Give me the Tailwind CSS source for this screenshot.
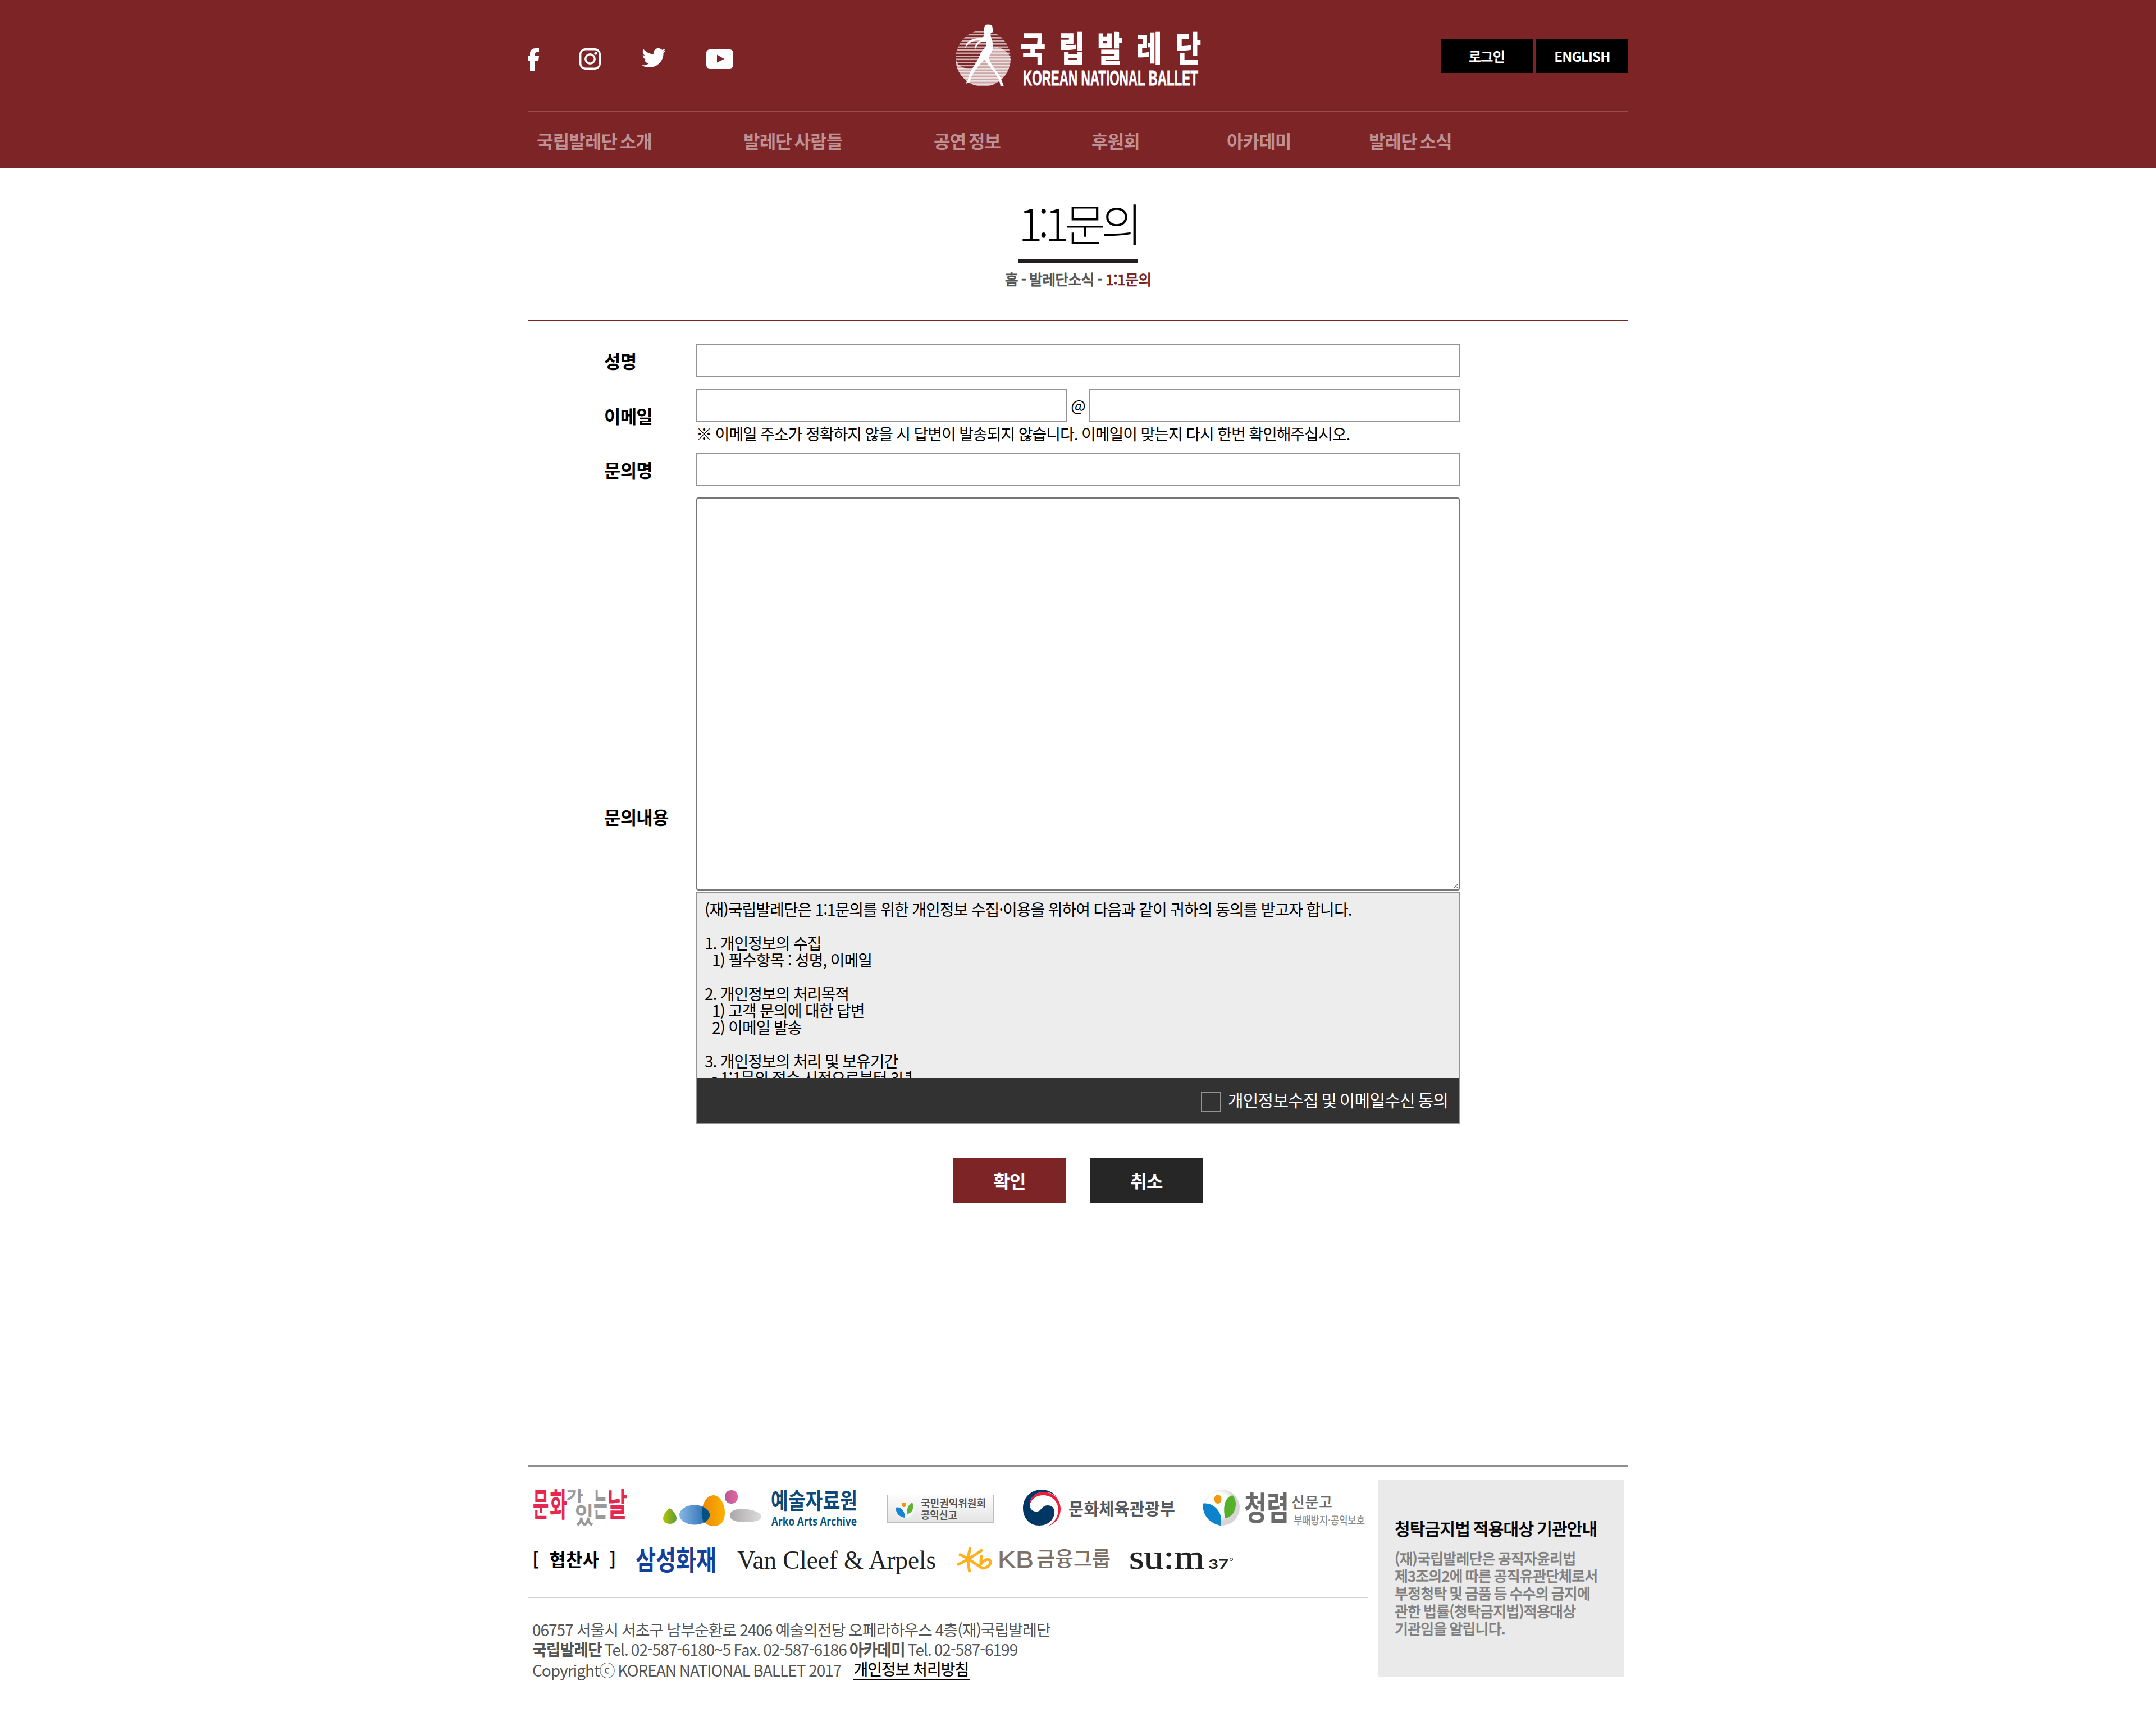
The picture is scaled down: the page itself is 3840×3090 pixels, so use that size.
<!DOCTYPE html>
<html lang="ko">
<head>
<meta charset="utf-8">
<title>1:1문의 | 국립발레단</title>
<script src="https://cdn.jsdelivr.net/npm/@tailwindcss/browser@4"></script>
</head>
<body class="bg-white text-black tracking-[-0.8px] font-['Noto_Sans_CJK_KR','Noto_Sans',sans-serif]">
<header class="h-[300px] bg-[#7d2427]">
  <div class="mx-auto w-[1960px]">
    <div class="flex h-[200px] items-start border-b-2 border-[#964e50]">
      <svg class="mt-[86px] h-[40px] w-[20px]" viewBox="0 0 20 40" fill="#fff"><path d="M4 40V22H0v-8h4V10C4 3 8 0 14 0h6v7h-4c-2 0-3 1-3 3v4h7l-1 8h-6v18z"/></svg>
      <svg class="mt-[86px] ml-[72px] h-[38px] w-[38px]" viewBox="0 0 38 38" fill="none" stroke="#fff" stroke-width="3.4"><rect x="1.7" y="1.7" width="34.6" height="34.6" rx="9"/><circle cx="19" cy="19" r="8.2"/><circle cx="29" cy="9" r="2.6" fill="#fff" stroke="none"/></svg>
      <svg class="mt-[86px] ml-[73px] h-[34px] w-[43px]" viewBox="0 0 24 19.5" preserveAspectRatio="none" fill="#fff"><path d="M24 2.3a10 10 0 0 1-2.8.8A5 5 0 0 0 23.3.4a10 10 0 0 1-3.1 1.2 4.9 4.9 0 0 0-8.400 4.500A14 14 0 0 1 1.700.9a4.900 4.900 0 0 0 1.500 6.600A4.900 4.900 0 0 1 1 6.900c0 2.400 1.600 4.400 3.900 4.900a5 5 0 0 1-2.200.1 4.900 4.900 0 0 0 4.600 3.400A9.900 9.900 0 0 1 0 17.300 14 14 0 0 0 7.500 19.500c9.100 0 14.300-7.700 14-14.600A10 10 0 0 0 24 2.300z"/></svg>
      <svg class="mt-[88px] ml-[72px] h-[34px] w-[48px]" viewBox="0 0 48 34"><rect width="48" height="34" rx="6" fill="#fff"/><path d="M19 9.500L32 17 19 23.500z" fill="#7d2427"/></svg>
      <svg class="mt-[44px] ml-[396px] h-[110px] w-[436px] overflow-visible" viewBox="0 0 436 110" fill="#fff">
        <defs>
          <pattern id="stripe" width="10" height="5.5" patternUnits="userSpaceOnUse"><rect width="10" height="2.600" fill="#fff" fill-opacity=".66"/></pattern>
          <clipPath id="disc"><ellipse cx="49" cy="60" rx="49" ry="50"/></clipPath>
        </defs>
        <g clip-path="url(#disc)">
          <rect y="8" width="98" height="102" fill="url(#stripe)"/>
          <path d="M0 60C4 76 14 78 30 78C44 74 44 40 74 40C92 44 100 56 98 70L90 110H10L0 80z" fill-opacity=".6"/>
        </g>
        <path d="M53 1C56-1 63-1 65 2L67 12L62 16L63 23C68 34 68 44 62 52C58 58 60 64 65 72C73 84 80 92 82 99L86 110H80C79 100 74 90 66 81L51 62C44 70 38 76 33 84C27 92 27 98 25 103L18 105L22 97C24 90 26 84 31 76C38 66 42 58 45 50C50 42 56 42 54 30C42 30 40 34 34 45C34 36 38 30 46 27C32 28 24 30 17 42C19 28 30 25 40 24C48 24 52 22 51 14C50 8 51 4 53 1z"/>
        <g font-family="'Noto Sans CJK KR',sans-serif" font-weight="900" font-size="62" letter-spacing="0" transform="scale(.81 1)"><text x="141 227 311 397 483" y="66">국립발레단</text></g>
        <text x="120" y="108" font-family="'Liberation Sans',sans-serif" font-weight="700" font-size="37" letter-spacing="0" stroke="#fff" stroke-width=".8" textLength="312" lengthAdjust="spacingAndGlyphs">KOREAN NATIONAL BALLET</text>
      </svg>
      <div class="mt-[70px] ml-auto flex gap-[6px] text-center text-[24px] leading-[60px] font-bold text-white">
        <a class="h-[60px] w-[164px] bg-black">로그인</a>
        <a class="h-[60px] w-[164px] bg-black">ENGLISH</a>
      </div>
    </div>
    <nav class="grid h-[100px] grid-cols-[368px_339px_281px_241px_253px_1fr] pl-[16px] text-[32px] leading-[100px] font-bold text-[#be9193] [word-spacing:-3.5px]">
      <a>국립발레단 소개</a><a>발레단 사람들</a><a>공연 정보</a><a>후원회</a><a>아카데미</a><a>발레단 소식</a>
    </nav>
  </div>
</header>
<main class="mx-auto w-[1960px]">
  <div class="flex h-[272px] flex-col items-center border-b-2 border-[#7d2427] pt-[28px]">
    <h1 class="h-[140px] w-[212px] border-b-[6px] border-[#231f20] text-center text-[80px] leading-[134px] font-light tracking-[-8px] whitespace-nowrap">1:1문의</h1>
    <p class="text-[26px] leading-[58px] font-medium text-[#555] [word-spacing:-0.6px] [-webkit-text-stroke:0.6px]">홈 - 발레단소식 - <span class="text-[#7d2427]">1:1문의</span></p>
  </div>
  <form class="mt-[40px] ml-[136px] w-[1524px]">
    <div class="flex">
      <label class="w-[164px] text-[32px] leading-[60px] font-bold">성명</label>
      <input class="h-[60px] w-[1360px] border-2 border-[#939393]">
    </div>
    <div class="mt-[20px] flex h-[96px]">
      <label class="w-[164px] text-[32px] leading-[96px] font-bold">이메일</label>
      <div>
        <div class="flex h-[60px]">
          <input class="h-[60px] w-[660px] border-2 border-[#939393]">
          <span class="w-[40px] text-center text-[28px] leading-[58px]">@</span>
          <input class="h-[60px] w-[660px] border-2 border-[#939393]">
        </div>
        <p class="h-[36px] text-[28px] leading-[40px] tracking-[-1px] [word-spacing:-0.4px]">※ 이메일 주소가 정확하지 않을 시 답변이 발송되지 않습니다. 이메일이 맞는지 다시 한번 확인해주십시오.</p>
      </div>
    </div>
    <div class="mt-[18px] flex">
      <label class="w-[164px] text-[32px] leading-[60px] font-bold">문의명</label>
      <input class="h-[60px] w-[1360px] border-2 border-[#939393]">
    </div>
    <div class="mt-[20px] flex h-[1116px]">
      <label class="w-[164px] pt-[20px] text-[32px] leading-[1096px] font-bold">문의내용</label>
      <div class="flex flex-col gap-[2px]">
        <div class="relative">
          <textarea class="block h-[700px] w-[1360px] resize-none rounded-[4px] border-2 border-[#767676]"></textarea>
          <svg class="absolute right-[3px] bottom-[4px] h-[8px] w-[8px]" viewBox="0 0 8 8" stroke="#666" stroke-width="1.300"><path d="M0 8L8 0M5 8L8 5"/></svg>
        </div>
        <div class="h-[414px] border-2 border-[#939393] bg-[#ededed]">
          <div class="h-[330px] overflow-hidden px-[13px] pt-[14px] text-[28px] leading-[30px] tracking-[-1px] whitespace-pre [word-spacing:-0.4px]">(재)국립발레단은 1:1문의를 위한 개인정보 수집·이용을 위하여 다음과 같이 귀하의 동의를 받고자 합니다.

1. 개인정보의 수집
&nbsp; 1) 필수항목 : 성명, 이메일

2. 개인정보의 처리목적
&nbsp; 1) 고객 문의에 대한 답변
&nbsp; 2) 이메일 발송

3. 개인정보의 처리 및 보유기간
&nbsp; - 1:1문의 접수 시점으로부터 3년</div>
          <div class="flex h-[80px] items-center justify-end gap-[12px] bg-[#323232] pr-[19px] text-[30px] leading-[76px] text-white [word-spacing:-2px]">
            <i class="mt-[4px] h-[36px] w-[36px] border-2 border-[#939393]"></i><span class="h-[80px]">개인정보수집 및 이메일수신 동의</span>
          </div>
        </div>
      </div>
    </div>
  </form>
  <div class="mt-[60px] flex justify-center gap-[44px] text-center text-[32px] leading-[80px] font-bold text-white">
    <a class="w-[200px] bg-[#7d2427]">확인</a>
    <a class="w-[200px] bg-[#262626]">취소</a>
  </div>
</main>
<footer class="mx-auto mt-[468px] flex w-[1960px] items-start border-t-2 border-[#8f8f8f]">
  <div class="w-[1496px]">
    <div class="flex h-[108px] items-start pt-[41px] pl-[10px] tracking-normal">
      <svg class="h-[66px] w-[168px] overflow-visible" viewBox="0 0 168 66" font-family="'Noto Sans CJK KR',sans-serif" font-weight="700" font-size="100">
        <g fill="#e5284e"><text transform="translate(-1 48) scale(.31 .58)">문</text><text transform="translate(29 48) scale(.34 .58)">화</text><text transform="translate(131 48) scale(.4 .58)">날</text></g>
        <g fill="#999"><text transform="translate(58 21) scale(.34 .26)">가</text><text transform="translate(74 61) scale(.36 .42)">있</text><text transform="translate(107 48) scale(.27 .58)">는</text></g>
      </svg>
      <svg class="ml-[62px] h-[66px] w-[347px] overflow-visible" viewBox="0 0 347 66">
        <defs>
          <linearGradient id="gr"><stop stop-color="#b9c400"/><stop offset="1" stop-color="#5c9a3c"/></linearGradient>
          <linearGradient id="bl"><stop stop-color="#86b6e4"/><stop offset="1" stop-color="#1f66ae"/></linearGradient>
          <linearGradient id="or"><stop stop-color="#ee8600"/><stop offset="1" stop-color="#fbb200"/></linearGradient>
          <linearGradient id="pk"><stop stop-color="#b35a92"/><stop offset="1" stop-color="#e466a2"/></linearGradient>
          <linearGradient id="gy"><stop stop-color="#aaa7a8"/><stop offset="1" stop-color="#dcdcdc"/></linearGradient>
        </defs>
        <path d="M13 33C20 38 25 46 25 51C25 57 20 61 13 61C6 61 1 57 1 51C1 46 6 38 13 33z" fill="url(#gr)"/>
        <path d="M91 10C103 11 111 26 111 41C111 56 104 65 91 65C78 65 70 56 70 41C70 25 79 10 91 10z" fill="url(#or)"/>
        <ellipse cx="57" cy="45" rx="27" ry="17.500" fill="url(#bl)"/>
        <path d="M71 31C79 34 84 40 84 45C84 50 80 56 74 59C69 50 69 40 71 31z" fill="#035182"/>
        <rect x="111" y="1" width="23" height="24" rx="11" fill="url(#pk)"/>
        <path d="M120 46C120 38 130 34 142 34C160 35 176 41 176 48C176 55 164 58 146 58C130 58 120 54 120 46z" fill="url(#gy)"/>
        <text x="193" y="34" fill="#0c4a7b" font-family="'Noto Sans CJK KR',sans-serif" font-weight="700" font-size="40" textLength="154" lengthAdjust="spacingAndGlyphs">예술자료원</text>
        <text x="194" y="64" fill="#0c5680" font-family="'Open Sans',sans-serif" font-weight="700" font-size="21" textLength="152" lengthAdjust="spacingAndGlyphs">Arko Arts Archive</text>
      </svg>
      <svg class="mt-[9px] ml-[53px] h-[50px] w-[190px] overflow-visible" viewBox="0 0 190 50">
        <defs><linearGradient id="bx" x2="0" y2="1"><stop stop-color="#fdfdfd"/><stop offset="1" stop-color="#e4e4e4"/></linearGradient></defs>
        <rect width="190" height="50" fill="#bdbdbd"/><rect width="188" height="49" x="1" fill="url(#bx)"/>
        <circle cx="32" cy="25" r="17" fill="#f6f6f6"/>
        <path d="M15 23C25 20 32 30 32 41C22 40 16 34 15 23z" fill="#1385d2"/><circle cx="30" cy="18" r="4" fill="#f39314"/><path d="M45 14C48 22 46 33 36 34C34 26 38 17 45 14z" fill="#5fb136"/>
        <g fill="#555" font-family="'Noto Sans CJK KR',sans-serif" font-weight="700" font-size="18"><text x="60" y="22" textLength="116" lengthAdjust="spacingAndGlyphs">국민권익위원회</text><text x="60" y="43" textLength="65" lengthAdjust="spacingAndGlyphs">공익신고</text></g>
      </svg>
      <svg class="ml-[52px] h-[66px] w-[271px] overflow-visible" viewBox="0 0 271 66">
        <path d="M33 0C14 0 0 14 0 33C0 51 12 64 29 64C45 64 56 53 56 40C56 32 51 28 44 28C37 28 34 33 30 37C26 41 13 40 12 28C12 14 22 5 36 4C48 4 55 8 60 13C54 5 44 0 33 0z" fill="#003764"/>
        <path d="M12 28C12 14 22 5 36 4C52 4 67 16 67 34C67 50 58 60 45 65C56 58 63 48 63 36C63 20 50 10 36 10C24 10 14 17 12 28z" fill="#f01c38"/>
        <text x="81" y="45" fill="#57585a" font-family="'Noto Sans CJK KR',sans-serif" font-weight="700" font-size="30" textLength="190" lengthAdjust="spacingAndGlyphs">문화체육관광부</text>
      </svg>
      <svg class="ml-[49px] h-[66px] w-[290px] overflow-visible" viewBox="0 0 290 66">
        <defs><radialGradient id="ball" cx=".4" cy=".4"><stop offset=".6" stop-color="#fff"/><stop offset="1" stop-color="#d6d6d6"/></radialGradient></defs>
        <circle cx="34" cy="32" r="32" fill="url(#ball)"/>
        <path d="M0 25C16 22 33 36 33 54L32 64C14 60 0 48 0 25z" fill="#0c83cc"/>
        <ellipse cx="27" cy="17" rx="6.500" ry="8" fill="#f49a12"/>
        <path d="M53 10C64 20 60 48 40 51C36 34 38 14 53 10z" fill="#57b02c"/>
        <g fill="#6a6a6a" font-family="'Noto Sans CJK KR',sans-serif"><text transform="translate(74 54) scale(.8 1.150)" font-weight="700" font-size="50" textLength="100" lengthAdjust="spacingAndGlyphs">청렴</text><text x="158" y="32" font-size="26" font-weight="500" textLength="73" lengthAdjust="spacing">신문고</text><text x="162" y="62" fill="#8c8c8c" font-size="19" font-weight="500" textLength="127" lengthAdjust="spacingAndGlyphs">부패방지·공익보호</text></g>
      </svg>
    </div>
    <div class="flex h-[126px] items-start border-b-2 border-[#d3d3d3] pt-[36px] pl-[8px]">
      <span class="w-[185px] text-[32px] leading-[40px] font-bold tracking-normal [word-spacing:9.5px]">[ 협찬사 ]</span>
      <svg class="h-[46px] w-[142px] overflow-visible tracking-normal" viewBox="0 0 142 46"><text x="-1" y="40" fill="#12409a" font-family="'Noto Sans CJK KR',sans-serif" font-weight="700" font-size="48" textLength="144" lengthAdjust="spacingAndGlyphs">삼성화재</text></svg>
      <svg class="ml-[38px] h-[52px] w-[354px] overflow-visible tracking-normal" viewBox="0 0 354 52"><text x="0" y="38" fill="#222" font-family="'Liberation Serif',serif" font-size="46" textLength="354" lengthAdjust="spacingAndGlyphs">Van Cleef &amp; Arpels</text></svg>
      <svg class="ml-[37px] h-[46px] w-[273px] overflow-visible tracking-normal" viewBox="0 0 273 46">
        <g fill="none" stroke="#fdb11e" stroke-width="5"><path d="M24 0C20 14 20 30 23 44M1 31C16 24 32 14 46 4M4 12C20 18 34 30 46 37C58 36 64 26 58 22C54 20 48 24 44 28M44 14C43 20 43 26 43 31"/></g>
        <text x="73" y="36" fill="#7d7064" stroke="#7d7064" stroke-width=".5" font-family="'Liberation Sans',sans-serif" font-size="42" textLength="64" lengthAdjust="spacingAndGlyphs">KB</text>
        <text x="142" y="34" fill="#7d7064" font-family="'Noto Sans CJK KR',sans-serif" font-weight="500" font-size="37" textLength="132" lengthAdjust="spacingAndGlyphs">금융그룹</text>
      </svg>
      <svg class="ml-[34px] h-[46px] w-[186px] overflow-visible tracking-normal" viewBox="0 0 186 46" fill="#222" font-family="'Liberation Serif',serif"><text x="0" y="38" font-size="62" stroke="#222" stroke-width=".6" textLength="134" lengthAdjust="spacingAndGlyphs">su:m</text><text x="141" y="38" font-family="Lato,sans-serif" font-size="22" font-weight="700" textLength="36" lengthAdjust="spacingAndGlyphs">37</text><circle cx="182" cy="21" r="2.500" fill="none" stroke="#222"/></svg>
    </div>
    <div class="pt-[39px] pl-[8px] text-[28px] leading-[35px] tracking-[-1px] text-[#555]">
      <p class="[word-spacing:-0.8px]">06757 서울시 서초구 남부순환로 2406 예술의전당 오페라하우스 4층(재)국립발레단</p>
      <p class="[word-spacing:-1.8px]"><b>국립발레단</b> Tel. 02-587-6180~5 Fax. 02-587-6186 <b>아카데미</b> Tel. 02-587-6199</p>
      <p class="flex"><span class="mt-[2px] [word-spacing:-1.1px]">Copyrightⓒ KOREAN NATIONAL BALLET 2017</span><a class="ml-[22px] h-[37px] border-b-2 border-black pr-[3px] text-black [-webkit-text-stroke:0.3px]">개인정보 처리방침</a></p>
    </div>
  </div>
  <aside class="mt-[24px] ml-[18px] h-[350px] w-[438px] bg-[#eaeaea] pt-[59px] pl-[30px] [word-spacing:-1.6px]">
    <h2 class="text-[30px] leading-[52px] font-medium [-webkit-text-stroke:0.5px]">청탁금지법 적용대상 기관안내</h2>
    <p class="mt-[12px] text-[26px] leading-[31.200px] font-medium whitespace-nowrap text-[#808080] [-webkit-text-stroke:0.5px]">(재)국립발레단은 공직자윤리법<br>제3조의2에 따른 공직유관단체로서<br>부정청탁 및 금품 등 수수의 금지에<br>관한 법률(청탁금지법)적용대상<br>기관임을 알립니다.</p>
  </aside>
</footer>
</body>
</html>
